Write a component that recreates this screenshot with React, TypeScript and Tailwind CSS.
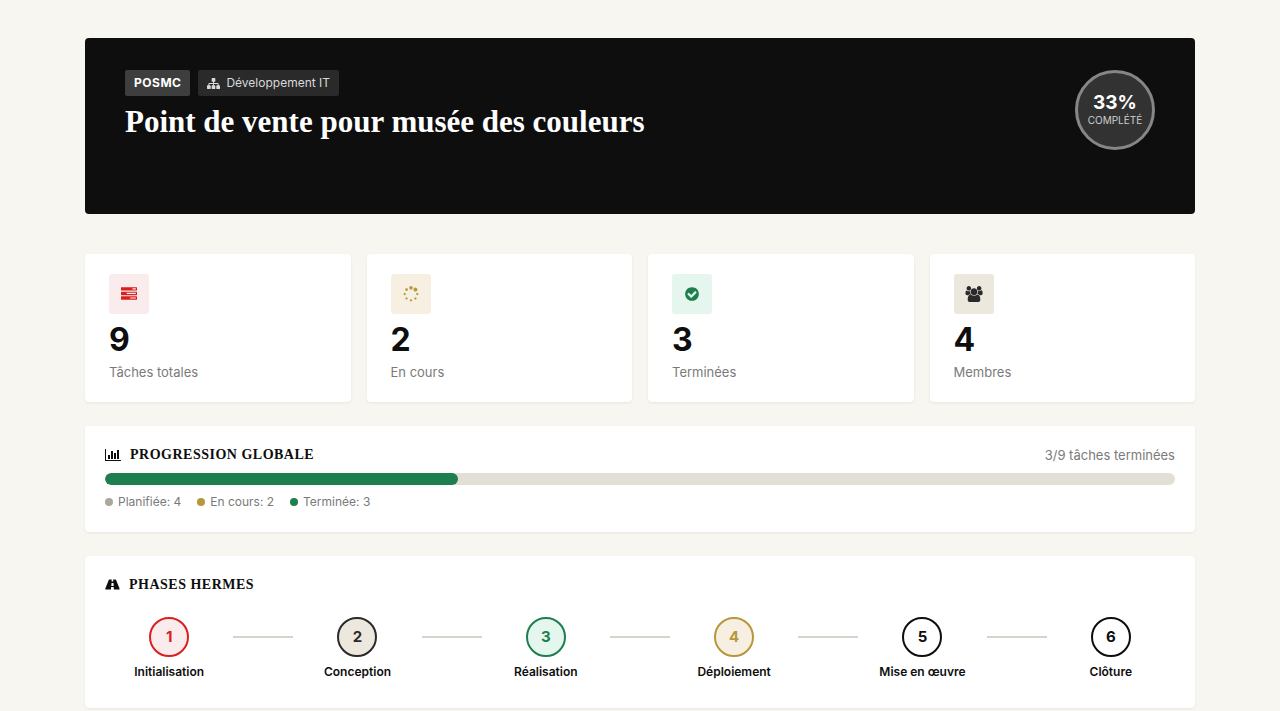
import type { ReactNode } from 'react';

type IconProps = { box: string; className: string; path: string };

function Icon({ box, className, path }: IconProps) {
  return (
    <svg viewBox={box} className={className} fill="currentColor" aria-hidden="true">
      <path d={path} />
    </svg>
  );
}

const SITEMAP =
  'M1792 1248v320q0 40-28 68t-68 28h-320q-40 0-68-28t-28-68v-320q0-40 28-68t68-28h96v-192h-512v192h96q40 0 68 28t28 68v320q0 40-28 68t-68 28h-320q-40 0-68-28t-28-68v-320q0-40 28-68t68-28h96v-192h-512v192h96q40 0 68 28t28 68v320q0 40-28 68t-68 28h-320q-40 0-68-28t-28-68v-320q0-40 28-68t68-28h96v-192q0-52 38-90t90-38h512v-192h-96q-40 0-68-28t-28-68v-320q0-40 28-68t68-28h320q40 0 68 28t28 68v320q0 40-28 68t-68 28h-96v192h512q52 0 90 38t38 90v192h96q40 0 68 28t28 68z';
const TASKS =
  'M1024 1408h640v-128h-640v128zm-384-512h1024v-128h-1024v128zm640-512h384v-128h-384v128zm512 832v256q0 26-19 45t-45 19h-1664q-26 0-45-19t-19-45v-256q0-26 19-45t45-19h1664q26 0 45 19t19 45zm0-512v256q0 26-19 45t-45 19h-1664q-26 0-45-19t-19-45v-256q0-26 19-45t45-19h1664q26 0 45 19t19 45zm0-512v256q0 26-19 45t-45 19h-1664q-26 0-45-19t-19-45v-256q0-26 19-45t45-19h1664q26 0 45 19t19 45z';
const SPINNER =
  'M526 1394q0 53-37.5 90.5t-90.5 37.5q-52 0-90-38t-38-90q0-53 37.5-90.5t90.5-37.5 90.5 37.5 37.5 90.5zm498 206q0 53-37.5 90.5t-90.5 37.5-90.5-37.5-37.5-90.5 37.5-90.5 90.5-37.5 90.5 37.5 37.5 90.5zm-704-704q0 53-37.5 90.5t-90.5 37.5-90.5-37.5-37.5-90.5 37.5-90.5 90.5-37.5 90.5 37.5 37.5 90.5zm1202 498q0 52-38 90t-90 38q-53 0-90.5-37.5t-37.5-90.5 37.5-90.5 90.5-37.5 90.5 37.5 37.5 90.5zm-964-996q0 66-47 113t-113 47-113-47-47-113 47-113 113-47 113 47 47 113zm1170 498q0 53-37.5 90.5t-90.5 37.5-90.5-37.5-37.5-90.5 37.5-90.5 90.5-37.5 90.5 37.5 37.5 90.5zm-640-704q0 80-56 136t-136 56-136-56-56-136 56-136 136-56 136 56 56 136zm530 206q0 93-66 158.5t-158 65.5q-93 0-158.5-65.5t-65.5-158.5q0-92 65.5-158t158.5-66q92 0 158 66t66 158z';
const CHECK_CIRCLE =
  'M1412 734q0-28-18-46l-91-90q-19-19-45-19t-45 19l-408 407-226-226q-19-19-45-19t-45 19l-91 90q-18 18-18 46 0 27 18 45l362 362q19 19 45 19 27 0 46-19l543-543q18-18 18-45zm252 162q0 209-103 385.5t-279.5 279.5-385.5 103-385.5-103-279.5-279.5-103-385.5 103-385.5 279.5-279.5 385.5-103 385.5 103 279.5 279.5 103 385.5z';
const USERS =
  'M657 896q-162 5-265 128h-134q-82 0-138-40.5t-56-118.5q0-353 124-353 6 0 43.5 21t97.5 42.5 119 21.5q67 0 133-23-5 37-5 66 0 159 93 290zm1071 637q0 120-73 189.5t-194 69.5h-874q-121 0-194-69.5t-73-189.5q0-53 3.5-103.5t14-109 26.5-108.5 43-97.5 62-81 85.5-53.5 111.5-20q10 0 43 21.5t73 48 107 48 135 21.5 135-21.5 107-48 73-48 43-21.5q61 0 111.5 20t85.5 53.5 62 81 43 97.5 26.5 108.5 14 109 3.5 103.5zm-1024-1277q0 106-75 181t-181 75-181-75-75-181 75-181 181-75 181 75 75 181zm704 384q0 159-112.5 271.5t-271.5 112.5-271.5-112.5-112.5-271.5 112.5-271.5 271.5-112.5 271.5 112.5 112.5 271.5zm576 225q0 78-56 118.5t-138 40.5h-134q-103-123-265-128 93-131 93-290 0-29-5-66 66 23 133 23 59 0 119-21.5t97.5-42.5 43.5-21q124 0 124 353zm-128-609q0 106-75 181t-181 75-181-75-75-181 75-181 181-75 181 75 75 181z';
const BAR_CHART =
  'M640 896v512h-256v-512h256zm384-512v1024h-256v-1024h256zm1024 1152v128h-2048v-1536h128v1408h1920zm-640-896v768h-256v-768h256zm384-384v1152h-256v-1152h256z';
const ROAD =
  'M1111 1001v-4l-24-320q-1-13-11-22.5t-23-9.5h-186q-13 0-23 9.5t-11 22.5l-24 320v4q-1 12 8 20t21 8h244q12 0 21-8t8-20zm749 407q0 73-46 73h-704q13 0 22-9.5t8-22.5l-20-256q-1-13-11-22.5t-23-9.5h-272q-13 0-23 9.5t-11 22.5l-20 256q-1 13 8 22.5t22 9.5h-704q-46 0-46-73 0-54 26-116l417-1044q8-19 26-33t38-14h339q-13 0-23 9.5t-11 22.5l-15 192q-1 14 8 23t22 9h166q13 0 22-9t8-23l-15-192q-1-13-11-22.5t-23-9.5h339q20 0 38 14t26 33l417 1044q26 62 26 116z';

const SQUARE = '0 0 1792 1792';

const stats = [
  { label: 'Tâches totales', value: 9, tone: 'bg-[#faebec] text-[#d8201f]', box: SQUARE, size: 'h-4 w-4', path: TASKS },
  { label: 'En cours', value: 2, tone: 'bg-[#f7f0e2] text-[#b8963a]', box: SQUARE, size: 'h-4 w-4', path: SPINNER },
  { label: 'Terminées', value: 3, tone: 'bg-[#e5f6ee] text-[#1c7f4d]', box: SQUARE, size: 'h-4 w-4', path: CHECK_CIRCLE },
  { label: 'Membres', value: 4, tone: 'bg-[#ede8dd] text-[#2a2a2a]', box: '64 0 1920 1792', size: 'h-4 w-[18px]', path: USERS },
];

const legend = [
  { label: 'Planifiée: 4', dot: 'bg-[#aba79d]' },
  { label: 'En cours: 2', dot: 'bg-[#b8963a]' },
  { label: 'Terminée: 3', dot: 'bg-[#1c7f4d]' },
];

const phases = [
  { name: 'Initialisation', tone: 'border-[#d8201f] bg-[#faebec] text-[#d8201f]' },
  { name: 'Conception', tone: 'border-[#2a2a2a] bg-[#ede8dd] text-[#2a2a2a]' },
  { name: 'Réalisation', tone: 'border-[#1c7f4d] bg-[#e5f6ee] text-[#1c7f4d]' },
  { name: 'Déploiement', tone: 'border-[#b8963a] bg-[#f7f0e2] text-[#b8963a]' },
  { name: 'Mise en œuvre', tone: 'border-[#0e0e0e] bg-white text-[#0e0e0e]' },
  { name: 'Clôture', tone: 'border-[#0e0e0e] bg-white text-[#0e0e0e]' },
];

function Card({ className, children }: { className: string; children: ReactNode }) {
  return <section className={`rounded bg-white shadow-[0_1px_3px_rgba(14,14,14,0.07)] ${className}`}>{children}</section>;
}

function SectionTitle({ icon, children }: { icon: ReactNode; children: ReactNode }) {
  return (
    <h2 className="flex items-center gap-[9px] font-['Liberation_Serif',serif] text-[14px] leading-[17px] font-bold tracking-[0.5px] uppercase">
      {icon}
      {children}
    </h2>
  );
}

export default function App() {
  return (
    <div className="min-h-screen bg-[#f7f6f1] px-4 pt-[38px] pb-6 font-['Inter',sans-serif] text-[#0e0e0e]">
      <main className="mx-auto flex max-w-[1110px] flex-col gap-6">
        <header className="mb-4 flex items-start justify-between rounded bg-[#0e0e0e] px-10 py-8 text-white">
          <div className="min-h-28">
            <div className="flex gap-2 text-xs leading-[26px]">
              <span className="rounded-xs bg-[#3e3e3e] px-[9px] font-bold tracking-[0.5px]">POSMC</span>
              <span className="flex items-center gap-1.5 rounded-xs bg-[#2a2a2a] px-[9px] text-[#d9d9d9]">
                <Icon box={SQUARE} className="size-[13px]" path={SITEMAP} />
                Développement IT
              </span>
            </div>
            <h1 className="mt-1.5 font-['Liberation_Serif',serif] text-[31px] leading-10 font-bold">
              Point de vente pour musée des couleurs
            </h1>
          </div>
          <div className="flex size-20 shrink-0 flex-col items-center justify-center rounded-full border-3 border-[#868686] bg-[#323232]">
            <span className="text-[19px] leading-5 font-bold">33%</span>
            <span className="text-[10px] leading-[15px] text-[#cfcfcf] uppercase">Complété</span>
          </div>
        </header>

        <div className="grid grid-cols-2 gap-4 md:grid-cols-4">
          {stats.map((s) => (
            <Card key={s.label} className="px-6 py-5">
              <div className={`flex size-10 items-center justify-center rounded-[3px] ${s.tone}`}>
                <Icon box={s.box} className={s.size} path={s.path} />
              </div>
              <p className="mt-2 text-[32px] leading-9 font-bold">{s.value}</p>
              <p className="mt-1 text-[13px] leading-5 text-[#7a7a7a]">{s.label}</p>
            </Card>
          ))}
        </div>

        <Card className="p-5">
          <div className="mb-2 flex items-start justify-between">
            <SectionTitle icon={<Icon box="0 0 2048 1792" className="h-3.5 w-4" path={BAR_CHART} />}>
              Progression globale
            </SectionTitle>
            <span className="text-[13px] leading-[19px] text-[#7a7a7a]">3/9 tâches terminées</span>
          </div>
          <div className="h-3 overflow-hidden rounded-full bg-[#e3dfd7]">
            <div className="h-full w-[33%] rounded-full bg-[#1c7f4d]" />
          </div>
          <ul className="mt-2 mb-0.5 flex gap-4 text-xs leading-[17px] text-[#7a7a7a]">
            {legend.map((l) => (
              <li key={l.label} className="flex items-center gap-[5px]">
                <span className={`size-2 rounded-full ${l.dot}`} />
                {l.label}
              </li>
            ))}
          </ul>
        </Card>

        <Card className="p-5">
          <SectionTitle icon={<Icon box="0 0 1920 1792" className="h-3.5 w-[15px]" path={ROAD} />}>
            Phases Hermes
          </SectionTitle>
          <ol className="mt-4 flex py-2">
            {phases.map((p, i) => (
              <li key={p.name} className={i === 0 ? 'flex flex-1' : 'flex flex-[1_1_60px]'}>
                {i > 0 && <span className="mt-[19px] h-0.5 w-[60px] shrink-0 bg-[#d7d4cb]" />}
                <div className="flex flex-1 flex-col items-center">
                  <span className={`flex size-10 items-center justify-center rounded-full border-2 text-[15px] font-bold ${p.tone}`}>
                    {i + 1}
                  </span>
                  <span className="mt-1.5 text-xs leading-[17px] font-semibold whitespace-nowrap">{p.name}</span>
                </div>
              </li>
            ))}
          </ol>
        </Card>
      </main>
    </div>
  );
}
